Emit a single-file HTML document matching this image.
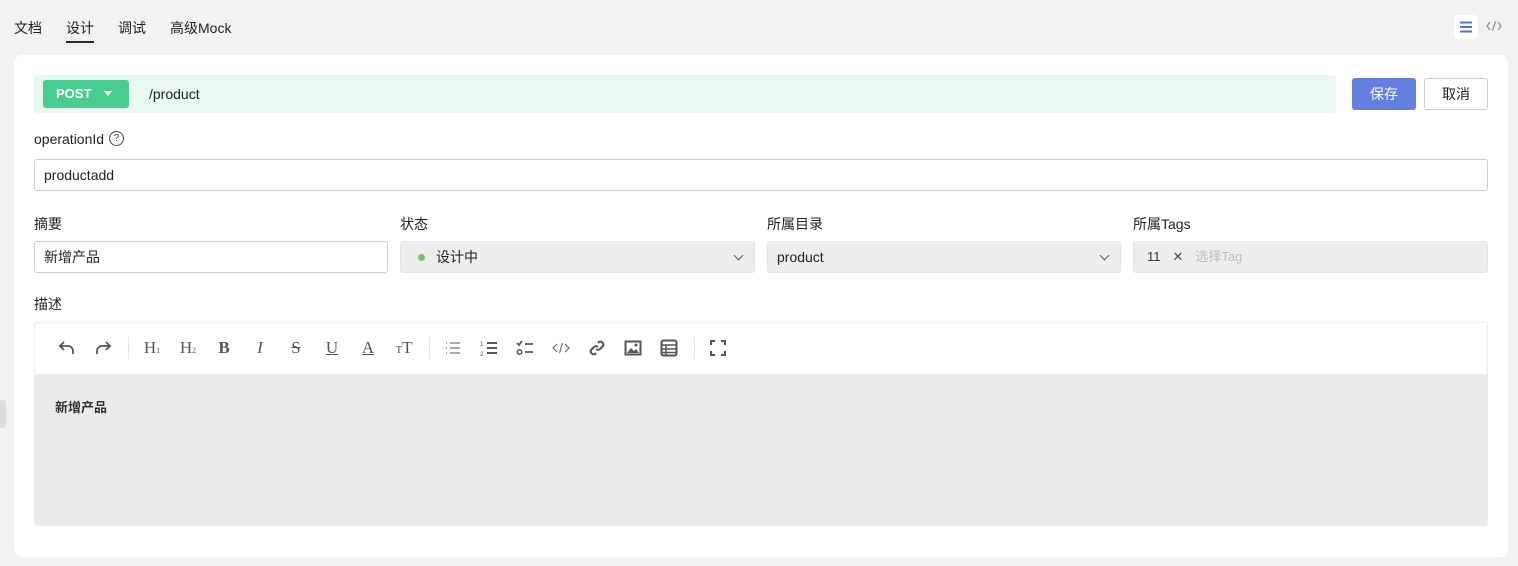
<!DOCTYPE html>
<html><head><meta charset="utf-8"><style>
*{box-sizing:border-box;margin:0;padding:0}
body{width:1518px;height:566px;background:#f2f2f2;font-family:"Liberation Sans","Noto Sans CJK SC",sans-serif;font-size:14px;color:#222;position:relative;overflow:hidden}
.a{position:absolute}
.tab{position:absolute;top:18px;font-size:14px;color:#222}
.card{left:14px;top:55px;width:1494px;height:502px;background:#fff;border-radius:8px}
.inp{position:absolute;height:32px;border:1px solid #ccc;border-radius:3px;background:#fff;padding-left:9px;line-height:30px;font-size:14px}
.sel{position:absolute;height:32px;border-radius:3px;background:#eeeeee;border:1px solid #e6e6e6;line-height:30px;font-size:14px;padding-left:9px}
.lbl{position:absolute;font-size:14px;color:#222}
.chev{position:absolute;right:12px;top:10px;width:7px;height:7px;border-right:1.3px solid #555;border-bottom:1.3px solid #555;transform:rotate(45deg)}
.ic{position:absolute;top:338px;width:20px;height:20px;color:#555;font-size:17px;text-align:center;line-height:20px;font-family:"Liberation Serif",serif}
.sep{position:absolute;top:337px;width:1px;height:22px;background:#e6e6e6}
</style></head><body>
<div class="tab" style="left:14px">文档</div>
<div class="tab" style="left:66px">设计</div>
<div class="a" style="left:66px;top:41px;width:28px;height:2px;background:#2a2a3a"></div>
<div class="tab" style="left:118px">调试</div>
<div class="tab" style="left:170px">高级Mock</div>
<div class="a" style="left:1454px;top:15px;width:24px;height:24px;background:#fff;border-radius:4px"></div>
<svg class="a" style="left:1459px;top:20px" width="14" height="14"><path d="M1 2.5h12M1 7h12M1 11.5h12" stroke="#5470d8" stroke-width="2"/></svg>
<svg class="a" style="left:1486px;top:20px" width="16" height="12"><path d="M4 2L1 6l3 4M12 2l3 4-3 4M9.5 1.5L6.5 10.5" stroke="#888" fill="none" stroke-width="1.2"/></svg>
<div class="a" style="left:0;top:400px;width:6px;height:28px;background:#ddd;border-radius:0 3px 3px 0"></div>

<div class="a card"></div>
<div class="a" style="left:34px;top:75px;width:1302px;height:38px;background:#e9f8f0;border-radius:3px"></div>
<div class="a" style="left:43px;top:80px;width:86px;height:28px;background:#49cc90;border-radius:3px;color:#fff;font-size:13px;line-height:28px;padding-left:13px;font-weight:bold">POST</div>
<div class="a" style="left:104px;top:91px;width:0;height:0;border-left:4.5px solid transparent;border-right:4.5px solid transparent;border-top:5px solid #fff"></div>
<div class="a" style="left:149px;top:86px;font-size:14px">/product</div>
<div class="a" style="left:1352px;top:78px;width:64px;height:32px;background:#6380e0;border-radius:3px;color:#fff;text-align:center;line-height:32px">保存</div>
<div class="a" style="left:1424px;top:78px;width:64px;height:32px;border:1px solid #ccc;border-radius:3px;color:#222;text-align:center;line-height:30px">取消</div>

<div class="lbl" style="left:34px;top:131px">operationId</div>
<div class="a" style="left:109px;top:131px;width:15px;height:15px;border:1.2px solid #444;border-radius:50%;font-size:10px;text-align:center;line-height:13px;color:#444">?</div>
<div class="inp" style="left:34px;top:159px;width:1454px">productadd</div>

<div class="lbl" style="left:34px;top:214px">摘要</div>
<div class="lbl" style="left:400px;top:214px">状态</div>
<div class="lbl" style="left:767px;top:214px">所属目录</div>
<div class="lbl" style="left:1133px;top:214px">所属Tags</div>
<div class="inp" style="left:34px;top:241px;width:354px">新增产品</div>
<div class="sel" style="left:400px;top:241px;width:355px;padding-left:35px">设计中<span class="a" style="left:17px;top:12px;width:7px;height:7px;border-radius:50%;background:#7ac25a"></span><span class="chev"></span></div>
<div class="sel" style="left:767px;top:241px;width:354px">product<span class="chev"></span></div>
<div class="sel" style="left:1133px;top:241px;width:355px;font-size:13px"><span style="color:#333;margin-left:4px">11</span><span style="color:#444;margin-left:12px">✕</span><span style="color:#bbb;margin-left:12px">选择Tag</span></div>

<div class="lbl" style="left:34px;top:294px">描述</div>
<div class="a" style="left:34px;top:322px;width:1454px;height:204px;border:1px solid #ececec;border-radius:3px;background:#ebebed;overflow:hidden">
<div style="height:52px;background:#fff;border-bottom:1px solid #ececec"></div>
<div class="a" style="left:20px;top:74px;font-size:13px;font-weight:bold;color:#333">新增产品</div>
</div>
<svg class="a" style="left:57px;top:338px" width="20" height="20"><path d="M7 4L3 8l4 4M3 8h8a5 5 0 015 5v3" stroke="#555" fill="none" stroke-width="1.8"/></svg>
<svg class="a" style="left:93px;top:338px" width="20" height="20"><path d="M13 4l4 4-4 4M17 8H9a5 5 0 00-5 5v3" stroke="#555" fill="none" stroke-width="1.8"/></svg>
<div class="sep" style="left:128px"></div>
<div class="ic" style="left:142px">H<span style="font-size:8px">1</span></div>
<div class="ic" style="left:178px">H<span style="font-size:8px">2</span></div>
<div class="ic" style="left:214px;font-weight:bold">B</div>
<div class="ic" style="left:250px;font-style:italic">I</div>
<div class="ic" style="left:286px;text-decoration:line-through">S</div>
<div class="ic" style="left:322px;text-decoration:underline">U</div>
<div class="ic" style="left:358px;text-decoration:underline">A</div>
<div class="ic" style="left:394px"><span style="font-size:11px">T</span>T</div>
<div class="sep" style="left:429px"></div>
<svg class="a" style="left:444px;top:339px" width="18" height="18"><path d="M6 4h10M6 9h10M6 14h10M2 4h1M2 9h1M2 14h1" stroke="#555" stroke-width="1"/></svg>
<svg class="a" style="left:480px;top:339px" width="18" height="18"><path d="M7 4h10M7 9h10M7 14h10" stroke="#555" stroke-width="2"/><text x="0" y="7" font-size="6" fill="#555">1</text><text x="0" y="17" font-size="6" fill="#555">2</text></svg>
<svg class="a" style="left:516px;top:339px" width="18" height="18"><path d="M1 4l2 2 3-4M9 5h8M9 13h8" stroke="#555" stroke-width="1.8" fill="none"/><circle cx="3.5" cy="13" r="2.2" stroke="#555" stroke-width="1.5" fill="none"/></svg>
<svg class="a" style="left:552px;top:340px" width="18" height="16"><path d="M5 4L1 8l4 4M13 4l4 4-4 4M10.5 3L7.5 13" stroke="#666" stroke-width="1.1" fill="none"/></svg>
<svg class="a" style="left:588px;top:339px" width="18" height="18"><path d="M8 10a3 3 0 004 0l3-3a3 3 0 00-4-4l-1 1M10 8a3 3 0 00-4 0l-3 3a3 3 0 004 4l1-1" stroke="#555" stroke-width="2" fill="none"/></svg>
<svg class="a" style="left:624px;top:339px" width="18" height="18"><rect x="1.5" y="2.5" width="15" height="13" stroke="#555" stroke-width="2" fill="none"/><path d="M3 14l4-5 3 3 2-2 3 4z" fill="#555"/><circle cx="12" cy="6" r="1.5" fill="#555"/></svg>
<svg class="a" style="left:660px;top:339px" width="18" height="18"><rect x="1.5" y="1.5" width="15" height="15" rx="2" stroke="#555" stroke-width="2" fill="none"/><path d="M2 6h14M2 10h14M2 13.5h14M6 6v10" stroke="#555" stroke-width="1.5"/></svg>
<div class="sep" style="left:694px"></div>
<svg class="a" style="left:709px;top:339px" width="18" height="18"><path d="M2 6V2h4M12 2h4v4M16 12v4h-4M6 16H2v-4" stroke="#555" stroke-width="2" fill="none"/></svg>
</body></html>
